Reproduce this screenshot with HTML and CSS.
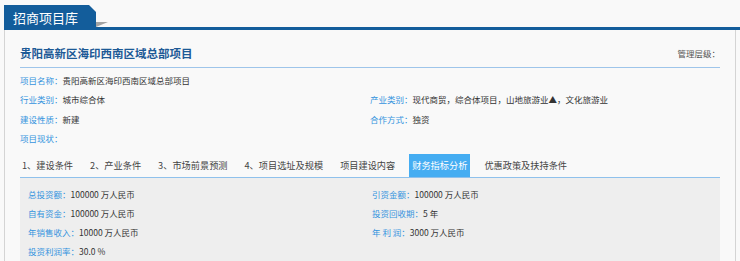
FILE: index.html
```html
<!DOCTYPE html>
<html lang="zh-CN">
<head>
    <meta charset="UTF-8">
    <meta name="viewport" content="width=device-width, initial-scale=1.0">
    <title>招商项目库</title>
    <link rel="stylesheet" href="styles.css">
</head>
<body>
    <div class="topbar">
        <div class="topbar-tab">招商项目库</div>
        <div class="topbar-rest">
            <div class="topbar-fold"></div>
            <div class="topbar-line"></div>
        </div>
    </div>

    <div class="panel">
        <div class="title-row">
            <h1>贵阳高新区海印西南区域总部项目</h1>
            <span class="level">管理层级：</span>
        </div>

        <div class="info">
            <div class="item"><span class="label">项目名称：</span>贵阳高新区海印西南区域总部项目</div>
            <div class="item"></div>
            <div class="item"><span class="label">行业类别：</span>城市综合体</div>
            <div class="item"><span class="label">产业类别：</span>现代商贸，综合体项目，山地旅游业▲，文化旅游业</div>
            <div class="item"><span class="label">建设性质：</span>新建</div>
            <div class="item"><span class="label">合作方式：</span>独资</div>
            <div class="item"><span class="label">项目现状：</span></div>
        </div>

        <ul class="tabs">
            <li>1、建设条件</li>
            <li>2、产业条件</li>
            <li>3、市场前景预测</li>
            <li>4、项目选址及规模</li>
            <li>项目建设内容</li>
            <li class="active">财务指标分析</li>
            <li>优惠政策及扶持条件</li>
        </ul>

        <div class="tab-body">
            <div class="item"><span class="label">总投资额：</span>100000 万人民币</div>
            <div class="item"><span class="label">引资金额：</span>100000 万人民币</div>
            <div class="item"><span class="label">自有资金：</span>100000 万人民币</div>
            <div class="item"><span class="label">投资回收期：</span>5 年</div>
            <div class="item"><span class="label">年销售收入：</span>10000 万人民币</div>
            <div class="item"><span class="label">年 利 润：</span>3000 万人民币</div>
            <div class="item"><span class="label">投资利润率：</span>30.0 %</div>
        </div>
    </div>
</body>
</html>
```

FILE: styles.css
```css
body {
    margin: 0;
    background: #f9f9f9;
    font-family: "Noto Sans CJK SC", "Noto Sans", sans-serif;
    color: #333;
}
.topbar {
    display: flex;
    height: 30px;
    padding-left: 4px;
    align-items: flex-end;
}
.topbar-tab {
    height: 25px;
    line-height: 25px;
    padding: 0 18px 0 9px;
    background: #135d9b;
    color: #fff;
    font-size: 13px;
    clip-path: polygon(0 0, calc(100% - 7px) 0, 100% 7px, 100% 100%, 0 100%);
}
.topbar-rest {
    flex: 1;
    display: flex;
    flex-direction: column;
    justify-content: flex-end;
}
.topbar-fold {
    width: 0;
    height: 0;
    border-top: 5px solid #a3a3a3;
    border-right: 12px solid transparent;
}
.topbar-line {
    height: 3px;
    background: #135d9b;
}
.panel {
    margin: 0 4px;
    padding: 0 15px;
    min-height: 240px;
    border-left: 1px solid #d4d4d4;
    border-right: 1px solid #d4d4d4;
}
.title-row {
    display: flex;
    justify-content: space-between;
    align-items: center;
    padding: 15px 0 6px 0;
    border-bottom: 1px solid #9ec5ea;
}
.title-row h1 {
    margin: 0;
    font-size: 11.5px;
    line-height: 16px;
    color: #1d5a96;
}
.level {
    font-size: 8.5px;
    color: #555;
}
.info {
    display: grid;
    grid-template-columns: 350px 1fr;
    grid-auto-rows: 19.5px;
    padding-top: 2px;
    font-size: 8.5px;
}
.item {
    display: flex;
    align-items: center;
    white-space: nowrap;
}
.label {
    color: #3594de;
}
.tabs {
    display: flex;
    gap: 11px;
    margin: 6px 0 0;
    padding: 0;
    list-style: none;
    border-bottom: 1px solid #8fc1ec;
    font-size: 9.2px;
}
.tabs li {
    height: 23px;
    line-height: 23px;
    padding: 0 3px;
    color: #444;
}
.tabs li:first-child {
    margin-left: -1px;
}
.tabs li.active {
    background: #45adf2;
    color: #fff;
}
.tab-body {
    display: grid;
    grid-template-columns: 344px 1fr;
    grid-auto-rows: 19px;
    padding: 6px 8px 10px;
    background: #eeeeee;
    font-size: 8.5px;
}
```
